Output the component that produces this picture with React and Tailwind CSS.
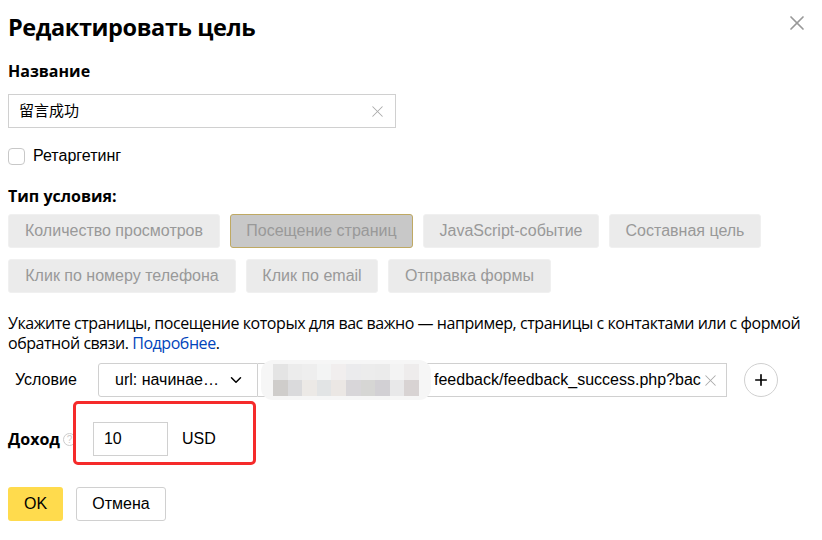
import { X, ChevronDown, Plus } from 'lucide-react';

const types1 = [
  { label: 'Количество просмотров', w: 'w-[212px]' },
  { label: 'Посещение страниц', w: 'w-[183px]', active: true },
  { label: 'JavaScript-событие', w: 'w-[176px]' },
  { label: 'Составная цель', w: 'w-[152px]' },
];
const types2 = [
  { label: 'Клик по номеру телефона', w: 'w-[228px]' },
  { label: 'Клик по email', w: 'w-[132px]' },
  { label: 'Отправка формы', w: 'w-[163px]' },
];

const blur = [
  ['#e4e4e4', '#ececec', '#eeeeee', '#f3f4f4', '#f1eeee', '#ebebed', '#ececec', '#ebebeb', '#f3f3f3', '#eeecec'],
  ['#cfcdcb', '#dadadc', '#ece9e6', '#e2e4e5', '#ebe7e4', '#d8d6d9', '#d6d6d4', '#d2d0d4', '#e8e8e9', '#d8d3d3'],
];

function TypeButton({ label, w, active }) {
  return (
    <button
      className={`h-[34px] ${w} rounded-[3px] border text-[16px] text-[#999] ${
        active ? 'bg-[#c8c8c8] border-[#bfa963]' : 'bg-[#ebebeb] border-[#f0f0f0]'
      }`}
    >
      {label}
    </button>
  );
}

export default function App() {
  return (
    <div className="w-[822px] h-[540px] bg-white text-black font-['Liberation_Sans',Arial,sans-serif] overflow-hidden">
      <div className="flex items-start justify-between pl-2 pr-[13px] pt-[10px]">
        <h1 className="text-[23.5px] leading-[34px] font-bold font-['Open_Sans',sans-serif] tracking-[-0.4px]">Редактировать цель</h1>
        <X className="w-[24px] h-[24px] mt-[1px] text-[#999]" strokeWidth={1.7} />
      </div>

      <div className="px-2">
        <div className="mt-[17px] text-[16px] leading-[20px] font-bold font-['Open_Sans',sans-serif]">Название</div>

        <div className="mt-[13px] w-[388px] h-[34px] border border-[#d0d0d0] flex items-center pl-[10px] pr-[8px] text-[15px]">
          <span className="flex-1 font-['Liberation_Sans','Noto_Sans_CJK_SC',sans-serif]">留言成功</span>
          <X className="w-[19px] h-[19px] text-[#aaa]" strokeWidth={1.3} />
        </div>

        <label className="mt-[19px] flex items-center gap-2 text-[16px] leading-[18px]">
          <span className="w-[17px] h-[17px] rounded-[4px] border border-[#c8c8c8] bg-white" />
          Ретаргетинг
        </label>

        <div className="mt-[21px] text-[16px] leading-[20px] font-bold font-['Open_Sans',sans-serif]">Тип условия:</div>

        <div className="mt-[8px] flex gap-[10px]">
          {types1.map((t) => (
            <TypeButton key={t.label} {...t} />
          ))}
        </div>
        <div className="mt-[11px] flex gap-[10px]">
          {types2.map((t) => (
            <TypeButton key={t.label} {...t} />
          ))}
        </div>

        <p className="mt-[20px] text-[16px] leading-[20px] font-['Open_Sans',sans-serif] tracking-[-0.45px]">
          Укажите страницы, посещение которых для вас важно — например, страницы с контактами или с формой обратной связи.{' '}
          <a className="text-[#04b]">Подробнее</a>.
        </p>

        <div className="mt-[10px] flex items-center">
          <span className="w-[90px] pl-[7px] text-[16px]">Условие</span>
          <div className="w-[160px] h-[34px] border border-[#d0d0d0] rounded-l-[3px] flex items-center pl-[16px] pr-[12px] text-[16px]">
            <span className="flex-1">url: начинае…</span>
            <ChevronDown className="w-[18px] h-[18px]" strokeWidth={2} />
          </div>
          <div className="w-[469px] h-[34px] border border-l-0 border-[#d0d0d0] flex items-center pr-[6px] text-[16px]">
            <div className="ml-[3px] mr-[3px] h-[40px] w-[170px] rounded-[12px] bg-[#f6f6f6] flex flex-col justify-center px-[12px] shrink-0">
              {blur.map((row, i) => (
                <div key={i} className="flex">
                  {row.map((c, j) => (
                    <span key={j} className="w-[15px] h-[16px]" style={{ backgroundColor: c }} />
                  ))}
                </div>
              ))}
            </div>
            <span className="flex-1 overflow-hidden whitespace-nowrap">feedback/feedback_success.php?bac</span>
            <X className="w-[19px] h-[19px] text-[#aaa] shrink-0" strokeWidth={1.3} />
          </div>
          <button className="ml-[17px] w-[34px] h-[34px] rounded-full border border-[#d0d0d0] flex items-center justify-center">
            <Plus className="w-[18px] h-[18px]" strokeWidth={2.2} />
          </button>
        </div>

        <div className="mt-[4px] flex items-start">
          <span className="mt-[28px] text-[16px] leading-[20px] font-bold font-['Open_Sans',sans-serif]">Доход</span>
          <span className="mt-[32px] ml-[3px] w-[13px] h-[13px] rounded-full border border-[#ccc] text-[10px] leading-[11px] text-[#ccc] flex items-center justify-center">?</span>
          <div className="-ml-[3px] w-[183px] h-[64px] border-[3px] border-[#f52a2a] rounded-[5px] flex items-start pt-[18px] pl-[17px]">
            <div className="w-[75px] h-[34px] border border-[#d0d0d0] flex items-center pl-[10px] text-[16px]">10</div>
            <span className="ml-[14px] mt-[7px] text-[16px] leading-[20px]">USD</span>
          </div>
        </div>

        <div className="mt-[22px] flex gap-[13px]">
          <button className="w-[55px] h-[34px] rounded-[3px] bg-[#ffdb4d] text-[16px]">OK</button>
          <button className="w-[90px] h-[34px] rounded-[3px] border border-[#d0d0d0] bg-white text-[16px]">Отмена</button>
        </div>
      </div>
    </div>
  );
}
